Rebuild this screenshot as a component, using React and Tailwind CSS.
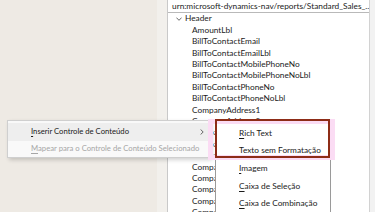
import React from "react";

const treeItems = [
  "AmountLbl",
  "BillToContactEmail",
  "BillToContactEmailLbl",
  "BillToContactMobilePhoneNo",
  "BillToContactMobilePhoneNoLbl",
  "BillToContactPhoneNo",
  "BillToContactPhoneNoLbl",
  "CompanyAddress1",
  "CompanyAddress2",
  "CompanyAddress3",
  "CompanyAddress4",
  "CompanyAddress5",
  "CompanyAddress6",
  "CompanyEMail",
  "CompanyGiroNo",
  "CompanyHomePage",
  "CompanyName",
];

const accel =
  "inline-block first-letter:underline first-letter:underline-offset-[1.5px] first-letter:decoration-[0.7px]";

export default function App() {
  return (
    <div
      className="relative flex w-[375px] h-[212px] overflow-hidden bg-[#eeeae4] text-[#1b1b1b]"
      style={{ fontFamily: 'Lato, "Noto Sans", sans-serif' }}
    >
      {/* left canvas */}
      <div className="flex-1 flex justify-end">
        <div className="w-[10px] h-full bg-[#f2f0ec]" />
      </div>

      {/* right pane */}
      <div className="w-[202px] h-full flex flex-col bg-white border-l border-[#c9c9c9]">
        <div className="h-[13px] shrink-0 flex items-center justify-between border-b border-[#b9b9b9] pl-[4px] pr-[3px] text-[8.3px] leading-none">
          <span className="whitespace-nowrap">urn:microsoft-dynamics-nav/reports/Standard_Sales_...</span>
          <svg width="6" height="4" viewBox="0 0 6 4" className="shrink-0">
            <path d="M0.5 0.8 L3 3.2 L5.5 0.8" fill="none" stroke="#555" strokeWidth="0.8" />
          </svg>
        </div>
        <div className="flex-1 flex flex-col text-[8.3px]">
          <div className="h-[11.4px] shrink-0 flex items-center pl-[8px]">
            <svg width="6" height="4" viewBox="0 0 6 4" className="mr-[3px]">
              <path d="M0.4 0.6 L3 3.3 L5.6 0.6" fill="none" stroke="#444" strokeWidth="0.8" />
            </svg>
            <span>Header</span>
          </div>
          {treeItems.map((t) => (
            <div key={t} className="h-[11.4px] shrink-0 flex items-center pl-[24px] whitespace-nowrap">
              {t}
            </div>
          ))}
        </div>
      </div>

      {/* far right strip */}
      <div className="w-[6px] h-full bg-[#f2f2f2] border-l border-[#d2d2d2]" />

      {/* context menu */}
      <div className="absolute left-[7px] top-[120px] w-[203px] h-[38px] bg-[#f9f9f9] border border-[#cfcfcf] shadow-[2px_2px_4px_rgba(0,0,0,0.18)] flex flex-col text-[7.7px] pt-[2px] whitespace-nowrap">
        <div className="h-[17.5px] shrink-0 flex items-center justify-between bg-[#eeeeee] pl-[23px] pr-[5px]">
          <span className={accel}>Inserir Controle de Conteúdo</span>
          <svg width="4" height="6" viewBox="0 0 4 6">
            <path d="M0.6 0.5 L3.2 3 L0.6 5.5" fill="none" stroke="#444" strokeWidth="0.8" />
          </svg>
        </div>
        <div className="h-[17.5px] shrink-0 flex items-center pl-[23px] text-[#a6a6a6]">
          <span className={accel}>Mapear para o Controle de Conteúdo Selecionado</span>
        </div>
      </div>

      {/* submenu */}
      <div className="absolute left-[215px] top-[119px] w-[116px] h-[100px] bg-white border border-[#9a9a9a] flex flex-col text-[8.3px] pt-[4px]">
        {["Rich Text", "Texto sem Formatação", "Imagem", "Caixa de Seleção", "Caixa de Combinação"].map((t) => (
          <div key={t} className="h-[17.7px] shrink-0 flex items-center pl-[23px] whitespace-nowrap">
            <span className={accel}>{t}</span>
          </div>
        ))}
      </div>

      {/* annotation highlight */}
      <div className="absolute left-[208px] top-[119px] w-[127px] h-[41px] border-[5px] border-[#fbdcf4] pointer-events-none" />
      <div className="absolute left-[215px] top-[119px] w-[115px] h-[39px] border-2 border-[#8d2c17] pointer-events-none" />
    </div>
  );
}
